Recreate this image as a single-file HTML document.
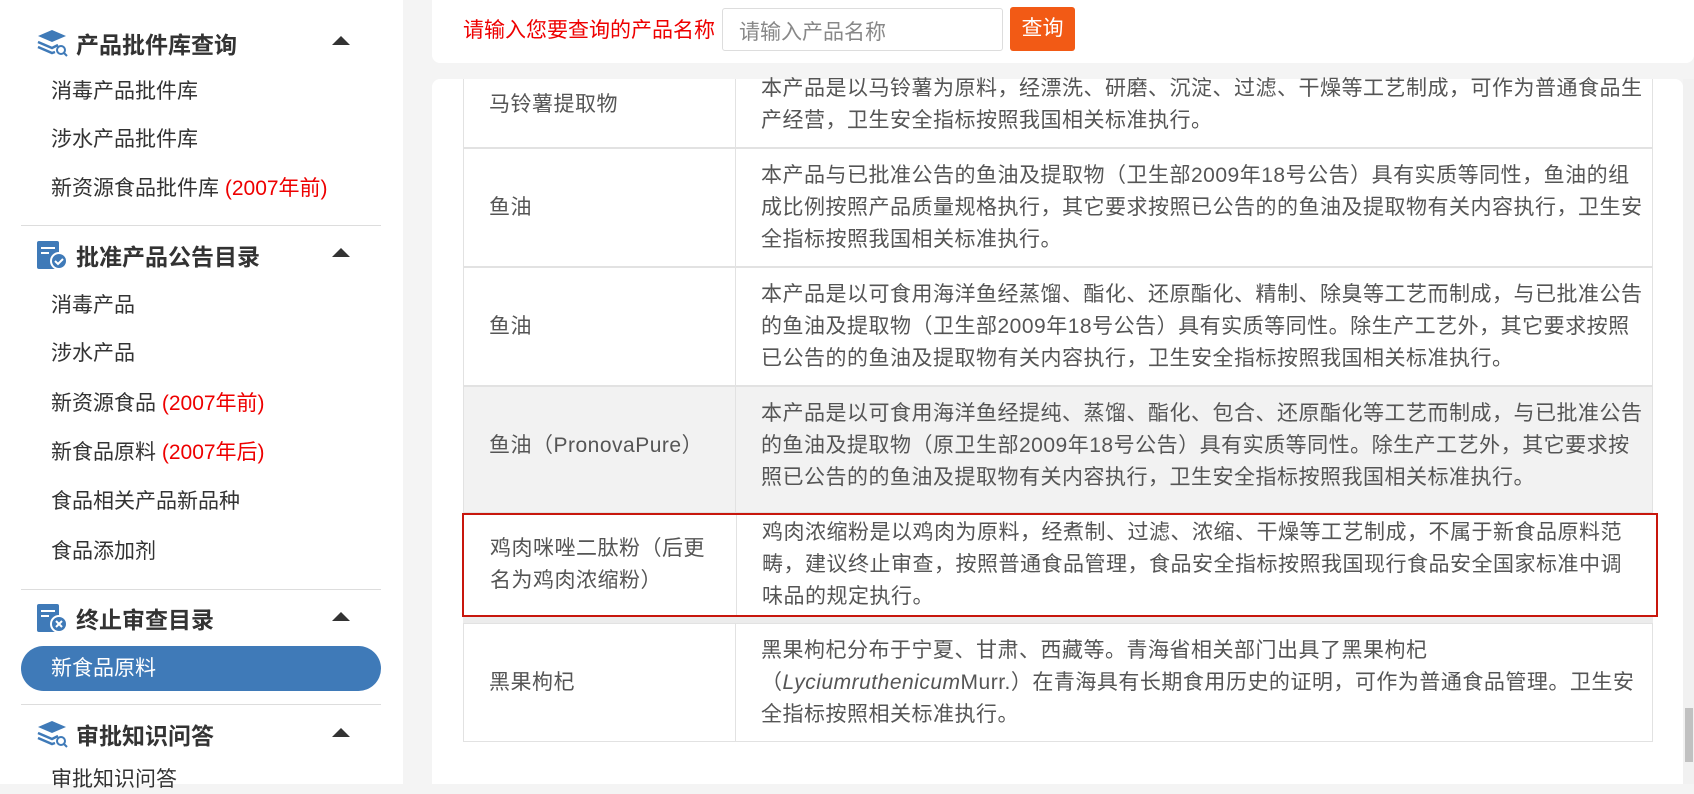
<!DOCTYPE html>
<html><head><meta charset="utf-8"><style>
*{margin:0;padding:0;box-sizing:border-box}
body{width:1694px;height:784px;overflow:hidden;background:#f4f4f4;font-family:"Liberation Sans","Noto Sans CJK SC",sans-serif;color:#333;position:relative}
.side{position:absolute;left:0;top:0;width:403px;height:784px;background:#fff}
.h{position:absolute;left:36px;font-size:23px;font-weight:bold;color:#333;display:flex;align-items:center;height:34px}
.h svg{margin-right:8px}
.arr{position:absolute;left:332px;width:0;height:0;border-left:9px solid transparent;border-right:9px solid transparent;border-bottom:9px solid #333}
.it{position:absolute;left:51px;font-size:21px;color:#333;line-height:28px}
.red{color:#e00}
.div{position:absolute;left:21px;width:360px;height:1px;background:#ddd}
.pill{position:absolute;left:21px;top:646px;width:360px;height:45px;border-radius:23px;background:#3f7ab8;color:#fff;font-size:21px;line-height:45px;padding-left:30px}
.top{position:absolute;left:432px;top:0;width:1262px;height:63px;background:#fff;border-radius:0 0 8px 8px}
.lbl{position:absolute;left:463px;top:14px;color:#e00;font-size:21px}
.inp{position:absolute;left:722px;top:8px;width:281px;height:43px;border:1px solid #ddd;border-radius:3px;font-size:21px;color:#888;padding:7px 16px}
.btn{position:absolute;left:1010px;top:7px;width:65px;height:44px;background:#f25a15;border-radius:3px;color:#fff;font-size:21px;text-align:center;line-height:44px}
.panel{position:absolute;left:432px;top:79px;width:1251px;height:705px;background:#fff;border-radius:8px 8px 0 0}
.row{position:absolute;left:463px;width:1190px;border:1px solid #e2e2e2;border-top:none;background:#fff}
.c1{position:absolute;left:0;top:0;bottom:0;width:272px;border-right:1px solid #e2e2e2;display:flex;align-items:center;padding-left:25px;padding-right:22px;font-size:21px;letter-spacing:0.5px;color:#555;line-height:32px}
.c2{position:absolute;left:272px;right:0;top:0;bottom:0;display:flex;align-items:center;padding:0 8px 0 25px;font-size:21px;letter-spacing:0.5px;color:#555;line-height:32px}
.sb{position:absolute;left:1683px;top:79px;width:11px;height:705px;background:#f1f1f1}
.th{position:absolute;left:1685px;top:708px;width:8px;height:54px;background:#c1c1c1}
</style></head><body>
<div class="side">
<div class="h" style="top:26px"><svg width="32" height="30" viewBox="0 0 32 30"><path d="M2 8 L16 2 L30 8 L16 14Z" fill="#3f7ab8"/><path d="M2 14 L16 20 L22 17 M2 19 L16 25 L19 24" stroke="#3f7ab8" stroke-width="2.5" fill="none"/><circle cx="25" cy="22" r="4" stroke="#3f7ab8" stroke-width="2" fill="none"/><path d="M28 25 L31 28" stroke="#3f7ab8" stroke-width="2"/></svg>产品批件库查询</div>
<div class="arr" style="top:36px"></div>
<div class="it" style="top:78px">消毒产品批件库</div>
<div class="it" style="top:126px">涉水产品批件库</div>
<div class="it" style="top:175px">新资源食品批件库 <span class="red">(2007年前)</span></div>
<div class="div" style="top:225px"></div>
<div class="h" style="top:238px"><svg width="32" height="30" viewBox="0 0 32 30"><rect x="1" y="1" width="22" height="28" rx="2" fill="#3f7ab8"/><path d="M5 8h14M5 13h8" stroke="#fff" stroke-width="2"/><circle cx="23" cy="21" r="8" fill="#3f7ab8" stroke="#fff" stroke-width="2"/><path d="M19 21l3 3 5-5" stroke="#fff" stroke-width="2" fill="none"/></svg>批准产品公告目录</div>
<div class="arr" style="top:248px"></div>
<div class="it" style="top:292px">消毒产品</div>
<div class="it" style="top:340px">涉水产品</div>
<div class="it" style="top:390px">新资源食品 <span class="red">(2007年前)</span></div>
<div class="it" style="top:439px">新食品原料 <span class="red">(2007年后)</span></div>
<div class="it" style="top:488px">食品相关产品新品种</div>
<div class="it" style="top:538px">食品添加剂</div>
<div class="div" style="top:589px"></div>
<div class="h" style="top:601px"><svg width="32" height="30" viewBox="0 0 32 30"><rect x="1" y="1" width="22" height="28" rx="2" fill="#3f7ab8"/><path d="M5 8h14M5 13h8" stroke="#fff" stroke-width="2"/><circle cx="23" cy="21" r="8" fill="#3f7ab8" stroke="#fff" stroke-width="2"/><path d="M20 18l6 6M26 18l-6 6" stroke="#fff" stroke-width="2"/></svg>终止审查目录</div>
<div class="arr" style="top:612px"></div>
<div class="pill">新食品原料</div>
<div class="div" style="top:704px"></div>
<div class="h" style="top:717px"><svg width="32" height="30" viewBox="0 0 32 30"><path d="M2 8 L16 2 L30 8 L16 14Z" fill="#3f7ab8"/><path d="M2 14 L16 20 L22 17 M2 19 L16 25 L19 24" stroke="#3f7ab8" stroke-width="2.5" fill="none"/><circle cx="25" cy="22" r="4" stroke="#3f7ab8" stroke-width="2" fill="none"/><path d="M28 25 L31 28" stroke="#3f7ab8" stroke-width="2"/></svg>审批知识问答</div>
<div class="arr" style="top:728px"></div>
<div class="it" style="top:766px">审批知识问答</div>
</div>
<div class="top"></div>
<div class="lbl">请输入您要查询的产品名称</div>
<div class="inp">请输入产品名称</div>
<div class="btn">查询</div>
<div class="panel"></div>
<div class="row" style="top:79px;height:69px"><div class="c1"><div style="margin-top:-16px">马铃薯提取物</div></div><div class="c2"><div style="margin-top:-16px">本产品是以马铃薯为原料，经漂洗、研磨、沉淀、过滤、干燥等工艺制成，可作为普通食品生产经营，卫生安全指标按照我国相关标准执行。</div></div></div>
<div class="row" style="top:148px;height:119px;border-top:1px solid #e2e2e2"><div class="c1">鱼油</div><div class="c2"><div>本产品与已批准公告的鱼油及提取物（卫生部2009年18号公告）具有实质等同性，鱼油的组成比例按照产品质量规格执行，其它要求按照已公告的的鱼油及提取物有关内容执行，卫生安全指标按照我国相关标准执行。</div></div></div>
<div class="row" style="top:267px;height:119px;border-top:1px solid #e2e2e2"><div class="c1">鱼油</div><div class="c2"><div>本产品是以可食用海洋鱼经蒸馏、酯化、还原酯化、精制、除臭等工艺而制成，与已批准公告的鱼油及提取物（卫生部2009年18号公告）具有实质等同性。除生产工艺外，其它要求按照已公告的的鱼油及提取物有关内容执行，卫生安全指标按照我国相关标准执行。</div></div></div>
<div class="row" style="top:386px;height:127px;border-top:1px solid #e2e2e2;background:#f2f2f2"><div class="c1" style="padding-bottom:8px"><div>鱼油（PronovaPure）</div></div><div class="c2" style="padding-bottom:8px"><div>本产品是以可食用海洋鱼经提纯、蒸馏、酯化、包合、还原酯化等工艺而制成，与已批准公告的鱼油及提取物（原卫生部2009年18号公告）具有实质等同性。除生产工艺外，其它要求按照已公告的的鱼油及提取物有关内容执行，卫生安全指标按照我国相关标准执行。</div></div></div>
<div class="row" style="top:513px;height:110px;border:none;background:#ececec"></div>
<div class="row" style="top:513px;height:104px;left:462px;width:1196px;border:2px solid #c8170d"><div class="c1" style="left:1px;width:272px"><div>鸡肉咪唑二肽粉（后更名为鸡肉浓缩粉）</div></div><div class="c2" style="left:273px;padding-right:14px"><div>鸡肉浓缩粉是以鸡肉为原料，经煮制、过滤、浓缩、干燥等工艺制成，不属于新食品原料范畴，建议终止审查，按照普通食品管理，食品安全指标按照我国现行食品安全国家标准中调味品的规定执行。</div></div></div>
<div class="row" style="top:623px;height:119px;border-top:1px solid #e2e2e2"><div class="c1">黑果枸杞</div><div class="c2"><div>黑果枸杞分布于宁夏、甘肃、西藏等。青海省相关部门出具了黑果枸杞（<i>Lyciumruthenicum</i>Murr.）在青海具有长期食用历史的证明，可作为普通食品管理。卫生安全指标按照相关标准执行。</div></div></div>
<div class="sb"></div><div class="th"></div>
</body></html>
